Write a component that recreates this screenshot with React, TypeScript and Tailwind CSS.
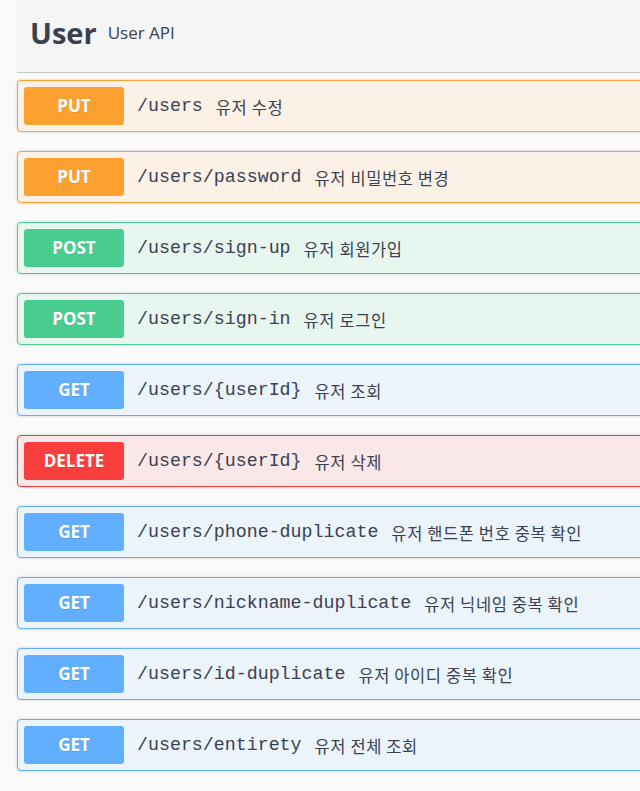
import React from 'react';

type Method = 'GET' | 'POST' | 'PUT' | 'DELETE';

const METHOD_STYLES: Record<Method, { row: string; badge: string }> = {
  GET: { row: 'bg-[#ebf3fb] border-[#61affe]', badge: 'bg-[#61affe]' },
  POST: { row: 'bg-[#e8f6f0] border-[#49cc90]', badge: 'bg-[#49cc90]' },
  PUT: { row: 'bg-[#fbf1e6] border-[#fca130]', badge: 'bg-[#fca130]' },
  DELETE: { row: 'bg-[#fae7e7] border-[#f93e3e]', badge: 'bg-[#f93e3e]' },
};

const ENDPOINTS: { method: Method; path: string; summary: string }[] = [
  { method: 'PUT', path: '/users', summary: '유저 수정' },
  { method: 'PUT', path: '/users/password', summary: '유저 비밀번호 변경' },
  { method: 'POST', path: '/users/sign-up', summary: '유저 회원가입' },
  { method: 'POST', path: '/users/sign-in', summary: '유저 로그인' },
  { method: 'GET', path: '/users/{userId}', summary: '유저 조회' },
  { method: 'DELETE', path: '/users/{userId}', summary: '유저 삭제' },
  { method: 'GET', path: '/users/phone-duplicate', summary: '유저 핸드폰 번호 중복 확인' },
  { method: 'GET', path: '/users/nickname-duplicate', summary: '유저 닉네임 중복 확인' },
  { method: 'GET', path: '/users/id-duplicate', summary: '유저 아이디 중복 확인' },
  { method: 'GET', path: '/users/entirety', summary: '유저 전체 조회' },
];

export default function App() {
  return (
    <div className="min-h-[791px] bg-[#fafafa] overflow-hidden font-['Open_Sans','Noto_Sans_CJK_KR',sans-serif] text-[#3b4151]">
      <div className="ml-[17px] w-[660px]">
        <div className="h-[73px] bg-[#f5f5f5] border-b border-[#c6c6c6] flex items-center pl-[13px] pb-[8px] mb-[7px]">
          <h3 className="text-[29px] font-bold leading-none">User</h3>
          <span className="ml-[11px] text-[17px] leading-none">User API</span>
        </div>

        {ENDPOINTS.map((ep, i) => (
          <EndpointRow key={i} {...ep} />
        ))}
      </div>
    </div>
  );
}

function EndpointRow({ method, path, summary }: { method: Method; path: string; summary: string }) {
  const s = METHOD_STYLES[method];
  return (
    <div
      className={`h-[52px] mb-[19px] border rounded-[4px] shadow-[0_0_3px_rgba(0,0,0,0.19)] flex items-center pl-[6px] ${s.row}`}
    >
      <span
        className={`w-[100px] h-[38px] rounded-[3px] flex items-center justify-center text-white font-bold text-[17px] [text-shadow:0_1px_0_rgba(0,0,0,0.1)] ${s.badge}`}
      >
        {method}
      </span>
      <span className="ml-[13px] mt-[2px] font-['Liberation_Mono','DejaVu_Sans_Mono',monospace] text-[18.3px] text-[#3b4151]">
        {path}
      </span>
      <span className="ml-[13px] mt-[2px] font-['Noto_Sans_CJK_KR',sans-serif] text-[16.5px] tracking-[0.6px] text-[#3b4151]">
        {summary}
      </span>
    </div>
  );
}
